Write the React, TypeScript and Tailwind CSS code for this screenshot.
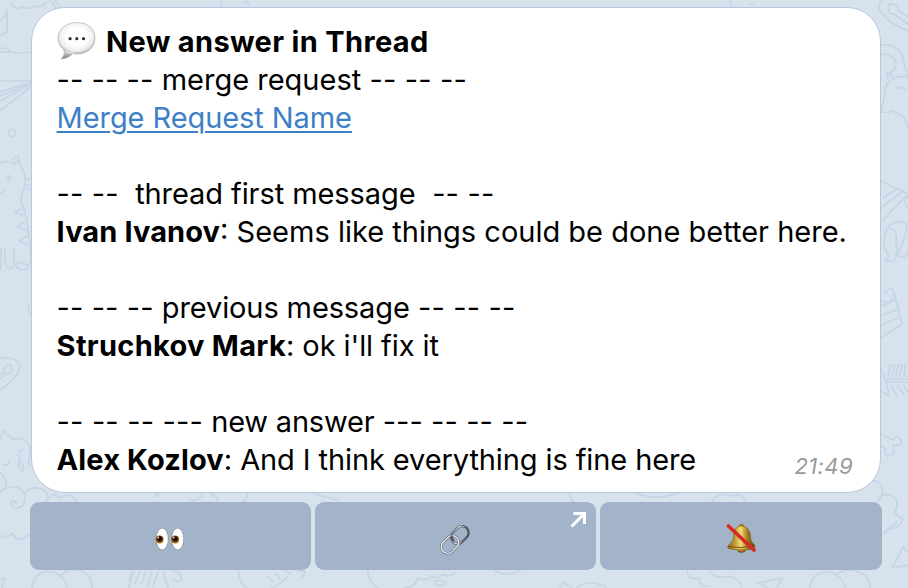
import React from "react";

type Part = { text: string; bold?: boolean; className: string };

function Line({ parts }: { parts: Part[] }) {
  return (
    <div className="flex h-[38px] items-center whitespace-pre">
      {parts.map((p, i) => (
        <span key={i} className={`${p.bold ? "font-bold" : ""} ${p.className}`}>{p.text}</span>
      ))}
    </div>
  );
}

function Doodles() {
  return (
    <svg className="absolute inset-0" width="908" height="588" viewBox="0 0 908 588" fill="none" stroke="#c6d4e4" strokeWidth="1.7" strokeLinecap="round" strokeLinejoin="round">
      <path d="M0 20Q6 18 7 10V32L0 36M0 48Q9 48 10 52Q20 54 32 52M0 52H10M0 81H32M32 82L0 92M32 84L0 101M32 86L1 110M32 83L0 96M11 3Q15 11 22 7Q29 10 33 6Q42 9 46 2M49 0Q54 3 58 12M54 0Q60 6 62 10" />
      <circle cx="12" cy="133" r="3.7" />
      <path d="M0 163Q6 160 12 163Q12 157 18 156L20 165Q28 177 24 188Q21 196 21 201Q29 220 31 260Q30 270 22 270Q16 269 16 264Q20 260 27 265M14 165L17 161M26 180L32 177M26 185H32M27 188L32 191M21 208L15 213L23 215M24 222L17 227L26 230M27 236L19 241L29 245M14 248V263Q14 270 7 268L5 260V248M1 248V270M0 193Q4 192 4 189" />
      <ellipse cx="9" cy="178" rx="1" ry="2.4" />
      <path d="M0 358Q18 357 20 366Q20 376 0 390M0 375L5 371Q2 366 7 366Q10 362 11 368Q15 371 10 373Q7 375 7 373L0 379M31 303Q26 310 31 315M0 441L3 431L14 440Q23 435 30 446L29 466M18 451Q22 454 22 448M3 465Q9 466 9 460M17 455Q22 458 19 461Q25 465 23 471Q17 468 19 461M0 473Q8 479 6 488L0 491M0 492Q16 481 24 493Q27 508 16 508Q9 507 12 501Q16 500 16 504M24 494Q34 483 46 492Q50 501 45 502M47 501Q52 490 60 498Q72 490 77 503M0 535Q5 541 12 533Q18 545 30 534" />
      <path d="M32 588Q34 571 49 572Q64 572 67 588M59 577Q68 567 79 570Q92 574 92 588M0 579L5 578L2 588M129 588L132 572M134 572L129 580M140 572L135 583M146 572L141 584M152 572L147 586M158 572L153 587M163 571L168 588M172 571Q182 571 181 580Q177 583 173 580M239 571Q238 582 247 588M272 588Q281 584 288 577M273 582L268 577M280 579L276 573M291 574L284 570M298 571Q310 570 302 577" />
      <path d="M368 570Q367 581 378 588M404 588Q416 587 418 578Q427 582 431 576Q437 580 443 574Q450 579 455 572M495 571Q506 577 520 571M560 588L563 582L572 588M577 587Q590 579 606 587" />
      <ellipse cx="440" cy="583" rx="5.5" ry="2.7" />
      <path d="M155 493Q158 500 158 492M190 500Q199 502 202 494M211 494Q218 496 217 501M248 492Q247 500 242 503M314 494L337 500M635 493Q656 501 679 493M569 494L573 502M712 503Q716 490 730 496Q743 491 746 503M687 571Q688 581 699 578Q700 588 709 586M709 571Q713 578 725 577Q738 575 742 587M757 583L783 578L776 588M757 583L768 588M810 588Q812 572 828 572Q842 573 845 588M835 575Q848 566 863 574Q870 579 870 588M873 481Q882 481 882 490Q884 498 877 501M878 498Q889 491 896 499Q899 505 895 512Q899 519 903 518Q900 529 888 529M884 533L897 522M903 547L892 568L908 565M903 547L908 552M730 0Q730 12 747 14M750 5Q754 2 755 8M221 0L222 7M243 3Q247 0 250 6" />
      <path d="M882 0Q875 7 883 14Q889 23 908 31M888 7Q888 2 894 5Q899 6 898 10L908 17M888 7Q889 15 894 14L908 24M881 45Q901 44 904 62L907 75M881 54Q891 54 895 60Q899 68 888 74M888 78L887 73M892 77L890 72M908 77Q892 74 886 86Q884 101 881 112Q891 113 892 110L905 118L908 129M897 88Q903 86 905 91M881 181L908 194L881 222M881 208L904 190M883 198L895 190M908 196Q902 203 908 208M887 253Q880 240 889 226Q899 218 907 225Q906 238 897 255L905 258L908 251M889 228Q898 228 896 241Q898 258 893 262L885 260Q891 257 887 253" />
      <path d="M885 293Q891 285 894 292L902 324L881 338M881 306L896 300M882 315L899 309M881 325L900 317M881 300Q891 307 893 295M881 369Q887 382 889 396L881 391M908 379H888L887 382L908 382M890 365L888 376L892 376L895 365ZM898 365L896 376L900 376L902 365ZM905 365L904 376L908 376M891 386L897 396M898 386L904 395M904 386L908 393M881 434L893 440Q897 434 901 440Q902 447 893 445Q896 456 888 456Q883 454 886 449L881 446" />
    </svg>
  );
}

function Speech() {
  return (
    <svg width="40" height="40" viewBox="0 0 40 40" className="relative -top-px mr-[9px] shrink-0">
      <defs>
        <radialGradient id="speech" cx="50%" cy="45%" r="55%"><stop offset=".5" stopColor="#fff" /><stop offset=".82" stopColor="#eee" /><stop offset="1" stopColor="#b5b5b5" /></radialGradient>
        <linearGradient id="tail" x2="0" y2="1"><stop stopColor="#eee" /><stop offset="1" stopColor="#777" /></linearGradient>
      </defs>
      <path d="M7 29Q8 35 4 38Q13 37 17 31Z" fill="url(#tail)" stroke="#aaa" strokeWidth=".7" />
      <path d="M20 1.5C9 1.5 1 8 1 17S9 33 20 33S38 26 38 17S31 1.5 20 1.5Z" fill="url(#speech)" stroke="#aaa" strokeWidth=".6" />
      <path d="M8 30Q12 32.5 17 32" stroke="#ddd" strokeWidth="1.5" fill="none" />
      <g fill="#333"><circle cx="13.1" cy="17.7" r="1.6" /><circle cx="19.8" cy="17.7" r="1.6" /><circle cx="26.5" cy="17.7" r="1.6" /></g>
    </svg>
  );
}

function Eyes() {
  return (
    <svg width="30" height="24" viewBox="0 0 30 24" className="mr-px">
      <defs><radialGradient id="iris" cy="40%"><stop offset=".35" stopColor="#180b05" /><stop offset=".65" stopColor="#4c2608" /><stop offset="1" stopColor="#b07b20" /></radialGradient></defs>
      {[0, 15.5].map((x) => (
        <g key={x} transform={`translate(${x} 0)`}>
          <ellipse cx="7.2" cy="12" rx="6.1" ry="11" fill="#fff" stroke="#8c919a" strokeWidth=".8" />
          <circle cx="4.6" cy="12.6" r="4" fill="url(#iris)" />
          <circle cx="3.2" cy="10.6" r="1" fill="#e8dbd1" />
        </g>
      ))}
    </svg>
  );
}

function Chain() {
  return (
    <svg width="30" height="30" viewBox="0 0 30 30" fill="none" className="mr-px">
      <defs><linearGradient id="steel" x2="1" y2="1"><stop stopColor="#4f5967" /><stop offset=".4" stopColor="#e6eaec" /><stop offset=".7" stopColor="#606974" /><stop offset="1" stopColor="#50423f" /></linearGradient></defs>
      <g transform="rotate(-46 19.8 10)"><rect x="10" y="3.4" width="19.6" height="13.2" rx="6.6" stroke="#535a65" strokeWidth="2.4" /><rect x="10" y="3.4" width="19.6" height="13.2" rx="6.6" stroke="url(#steel)" strokeWidth="1.1" /></g>
      <g transform="rotate(-46 10 19.5)"><rect x=".2" y="12.9" width="19.6" height="13.2" rx="6.6" stroke="#5a616b" strokeWidth="2.4" /><rect x=".2" y="12.9" width="19.6" height="13.2" rx="6.6" stroke="#e9edee" strokeWidth="1.4" /></g>
      <path d="M11.5 10.5Q11.5 14 14 16" stroke="#554b4b" strokeWidth="2" />
    </svg>
  );
}

function MutedBell() {
  return (
    <svg width="31" height="31" viewBox="0 0 32 32">
      <defs><linearGradient id="gold"><stop stopColor="#8d6417" /><stop offset=".3" stopColor="#c9a33b" /><stop offset=".48" stopColor="#f2dd76" /><stop offset=".72" stopColor="#a27a20" /><stop offset="1" stopColor="#544217" /></linearGradient></defs>
      <ellipse cx="16" cy="27.5" rx="4" ry="2.7" fill="#986014" stroke="#6b470d" />
      <circle cx="16" cy="3.3" r="2.5" fill="#9b7621" />
      <path d="M16 3C10 3 8 8 8 13Q8 19 3.5 22Q1 24 2 26Q7 28 16 28Q26 28 30 25Q30 22 27 20Q25 17 25 11Q23 3 16 3Z" fill="url(#gold)" stroke="#806013" strokeWidth=".7" />
      <path d="M3 24Q15 27 29 23" stroke="#76530d" strokeWidth="1" fill="none" />
      <ellipse cx="16" cy="28" rx="2.3" ry="1.3" fill="#b97b2b" />
      <path d="M2.5 3L29 28" stroke="#d82a20" strokeWidth="3.6" strokeLinecap="round" />
    </svg>
  );
}

export default function App() {
  return (
    <main className="relative h-[588px] w-[908px] overflow-hidden bg-[#d8e2ed] font-['Inter','Liberation_Sans',sans-serif] text-black">
      <Doodles />
      <div className="relative ml-[30px] w-[852px] pt-[7px]">
        <section className="relative ml-px h-[486px] w-[850px] rounded-[34px] border border-[#b4c9df] bg-white pl-[24.6px] pt-[15px] text-[29px] leading-[38px]">
          <div className="flex h-[38px] items-center whitespace-pre pl-[0.4px]"><Speech /><span className="font-bold tracking-[0.34px]">New answer in Thread</span></div>
          <Line parts={[{ text: "-- -- -- ", className: "tracking-[0.06px]" }, { text: "merge request", className: "" }, { text: " -- -- --", className: "tracking-[0.15px]" }]} />
          <div className="flex h-[38px] items-center text-[#3e7fc8]"><a className="tracking-[-0.08px] underline decoration-2 underline-offset-[3px]">Merge Request Name</a></div>
          <div className="h-[38px]" />
          <Line parts={[{ text: "-- --  ", className: "tracking-[0.1px]" }, { text: "thread first message", className: "tracking-[-0.08px]" }, { text: "  -- --", className: "tracking-[0.15px]" }]} />
          <Line parts={[{ text: "Ivan Ivanov", bold: true, className: "tracking-[0.1px]" }, { text: ": Seems like things could be done better here.", className: "" }]} />
          <div className="h-[38px]" />
          <Line parts={[{ text: "-- -- -- ", className: "tracking-[0.08px]" }, { text: "previous message", className: "tracking-[-0.12px]" }, { text: " -- -- --", className: "tracking-[0.15px]" }]} />
          <Line parts={[{ text: "Struchkov Mark", bold: true, className: "tracking-[0.3px]" }, { text: ": ok i'll fix it", className: "tracking-[-0.08px]" }]} />
          <div className="h-[38px]" />
          <Line parts={[{ text: "-- -- -- --- ", className: "tracking-[0.15px]" }, { text: "new answer", className: "tracking-[-0.2px]" }, { text: " --- -- -- --", className: "tracking-[0.08px]" }]} />
          <Line parts={[{ text: "Alex Kozlov", bold: true, className: "tracking-[0.12px]" }, { text: ": And I think everything is fine here", className: "tracking-[-0.1px]" }]} />
          <time className="absolute bottom-[10px] right-[27px] text-[22px] italic leading-8 tracking-[0.4px] text-[#999]">21:49</time>
        </section>
        <div className="mt-[9px] grid grid-cols-[281px_281px_282px] gap-1">
          <button className="flex h-[68px] items-center justify-center rounded-[9px] bg-[#a3b3ca] pt-[5px]"><Eyes /></button>
          <button className="relative flex h-[68px] items-center justify-center rounded-[9px] bg-[#a3b3ca] pt-[7px]"><Chain />
            <svg className="absolute right-[9px] top-[9px]" width="17" height="17" viewBox="0 0 17 17" fill="none" stroke="#fff" strokeWidth="3"><path d="M3.5 2.5H14.5V13M14 3L1.5 15.5" /></svg>
          </button>
          <button className="flex h-[68px] items-center justify-center rounded-[9px] bg-[#a3b3ca] pt-[5px]"><MutedBell /></button>
        </div>
      </div>
    </main>
  );
}
